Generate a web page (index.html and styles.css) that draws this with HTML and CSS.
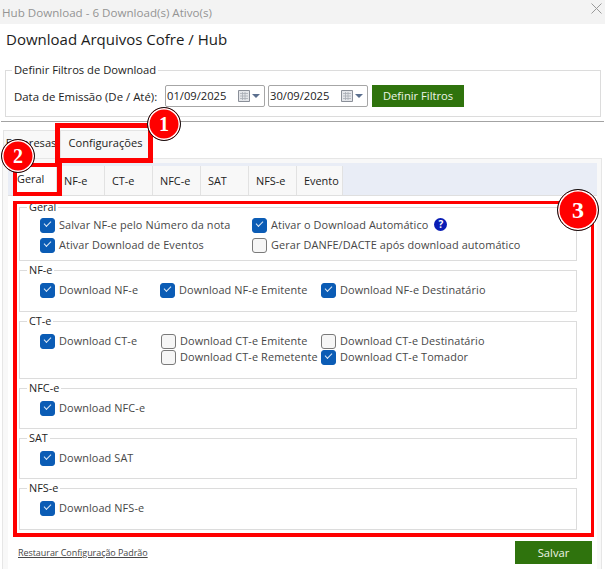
FILE: index.html
```html
<!DOCTYPE html>
<html lang="pt-BR">
<head>
<meta charset="utf-8">
<title>Hub Download</title>
<link rel="stylesheet" href="styles.css">
</head>
<body>
<div class="window">
  <header class="titlebar">
    <span class="title-text">Hub Download - 6 Download(s) Ativo(s)</span>
    <svg class="close" width="11" height="11" viewBox="0 0 11 11"><path d="M.5.5l10 10M10.5.5l-10 10" stroke="#9a9a9a" stroke-width="1" fill="none"/></svg>
  </header>
  <h1 class="heading">Download Arquivos Cofre / Hub</h1>
  <fieldset class="filters">
    <legend>Definir Filtros de Download</legend>
    <div class="filter-row">
      <span class="filter-label">Data de Emissão (De / Até):</span>
      <div class="date"><span class="date-val">01/09/2025</span>
        <svg width="22" height="14" viewBox="0 0 22 14"><path d="M.5 1.5h11v11h-11z" fill="#e4e6ea" stroke="#8a8f98"/><path d="M2 4.5h8M2 7h8M2 9.500h8M4.500 3v8M7 3v8" stroke="#a8adb5" stroke-width=".8"/><path d="M14 5h8l-4 4z" fill="#5b6f8e"/></svg>
      </div>
      <div class="date"><span class="date-val">30/09/2025</span>
        <svg width="22" height="14" viewBox="0 0 22 14"><path d="M.5 1.5h11v11h-11z" fill="#e4e6ea" stroke="#8a8f98"/><path d="M2 4.5h8M2 7h8M2 9.500h8M4.500 3v8M7 3v8" stroke="#a8adb5" stroke-width=".8"/><path d="M14 5h8l-4 4z" fill="#5b6f8e"/></svg>
      </div>
      <button class="btn btn-filter">Definir Filtros</button>
    </div>
  </fieldset>
  <div class="separator"></div>
  <nav class="tabs">
    <div class="tab tab-first">Empresas</div>
    <div class="tab tab-active">Configurações</div>
  </nav>
  <main class="panel">
    <div class="subtabs">
      <div class="subtab subtab-active">Geral</div>
      <div class="subtab">NF-e</div>
      <div class="subtab">CT-e</div>
      <div class="subtab">NFC-e</div>
      <div class="subtab">SAT</div>
      <div class="subtab">NFS-e</div>
      <div class="subtab subtab-last">Evento</div>
    </div>
    <div class="content">
      <fieldset class="group g-geral">
        <legend>Geral</legend>
        <div class="grid grid-geral">
          <label class="chk on">Salvar NF-e pelo Número da nota</label>
          <label class="chk on">Ativar o Download Automático <span class="help">?</span></label>
          <label class="chk on">Ativar Download de Eventos</label>
          <label class="chk">Gerar DANFE/DACTE após download automático</label>
        </div>
      </fieldset>
      <fieldset class="group g-nfe">
        <legend>NF-e</legend>
        <div class="grid grid-nfe">
          <label class="chk on">Download NF-e</label>
          <label class="chk on">Download NF-e Emitente</label>
          <label class="chk on">Download NF-e Destinatário</label>
        </div>
      </fieldset>
      <fieldset class="group g-cte">
        <legend>CT-e</legend>
        <div class="grid grid-cte">
          <label class="chk on">Download CT-e</label>
          <label class="chk">Download CT-e Emitente</label>
          <label class="chk">Download CT-e Destinatário</label>
          <span></span>
          <label class="chk">Download CT-e Remetente</label>
          <label class="chk on">Download CT-e Tomador</label>
        </div>
      </fieldset>
      <fieldset class="group g-one">
        <legend>NFC-e</legend>
        <label class="chk on">Download NFC-e</label>
      </fieldset>
      <fieldset class="group g-one">
        <legend>SAT</legend>
        <label class="chk on">Download SAT</label>
      </fieldset>
      <fieldset class="group g-one g-last">
        <legend>NFS-e</legend>
        <label class="chk on">Download NFS-e</label>
      </fieldset>
      <div class="footer">
        <a class="reset" href="#">Restaurar Configuração Padrão</a>
        <button class="btn btn-save">Salvar</button>
      </div>
    </div>
  </main>
  <div class="mark mark-config"></div>
  <div class="mark mark-geral"></div>
  <div class="mark mark-content"></div>
  <div class="badge badge-1">1</div>
  <div class="badge badge-2">2</div>
  <div class="badge badge-3">3</div>
</div>
</body>
</html>
```
FILE: styles.css
```css
* { box-sizing: border-box; }
html, body { margin: 0; padding: 0; background: #fff; }
body { width: 605px; height: 569px; overflow: hidden; font-family: "Open Sans", "Noto Sans", sans-serif; font-size: 11px; color: #1f1f1f; }
.window { position: relative; width: 605px; height: 569px; display: flex; flex-direction: column; }
.titlebar { height: 24px; flex: none; background: #f3f3f3; display: flex; align-items: center; justify-content: space-between; padding: 0 3px 0 2px; }
.title-text { font-size: 11.600px; color: #949494; }
.close { margin-bottom: 8px; }
.heading { margin: 4px 0 0 6px; height: 22px; line-height: 22px; font-size: 15px; font-weight: 400; color: #1c1c1c; flex: none; }
fieldset { margin: 0; padding: 0; min-width: 0; }
legend { padding: 0 2px; line-height: 12px; height: 12px; }
.filters { flex: none; margin: 14px 4px 0 5px; height: 53px; border: 1px solid #dcdcdc; padding: 0 0 0 8px; }
.filters legend { font-size: 11.200px; color: #222; margin-left: -2px; margin-top: -1px; }
.filter-row { display: flex; align-items: center; height: 23px; margin-top: 8px; }
.filter-label { width: 151px; font-size: 11.400px; color: #222; flex: none; margin-top: 2px; white-space: nowrap; }
.date { width: 100px; height: 22px; border: 1px solid #a6a6a6; border-radius: 2px; margin-right: 3px; display: flex; align-items: center; justify-content: space-between; padding: 0 4px 0 1px; font-size: 11.200px; color: #222; }
.btn { border: 0; border-radius: 0; background: #2f730d; color: #eef5e8; font-family: inherit; padding: 0; }
.btn-filter { width: 92px; height: 22px; margin-left: 1px; font-size: 11.200px; }
.separator { flex: none; height: 1px; margin: 4px 1px 0 1px; background: #a3a3a3; }
.tabs { flex: none; height: 28px; margin: 8px 0 0 3px; display: flex; align-items: stretch; }
.tab { background: #f8f8f8; border: 1px solid #e4e4e4; border-bottom: 0; display: flex; align-items: center; justify-content: center; font-size: 11.100px; color: #222; padding-bottom: 5px; }
.tab-first { width: 56px; }
.tab-active { width: 89px; margin-left: 1px; padding-left: 2px; }
.panel { flex: 1; min-height: 0; margin: 0 3px 0 2px; border: 1px solid #e6e6e6; border-bottom: 0; background: #f8f8f8; padding: 4px 4px 0 5px; display: flex; flex-direction: column; }
.subtabs { flex: none; height: 33px; background: #e9edf6; display: flex; padding: 3px 0 0 5px; border-bottom: 1px solid #dfdfdf; }
.subtab { width: 48px; background: #f8f8f8; border-right: 1px solid #e2e2e2; display: flex; align-items: center; padding: 0 0 1px 7px; font-size: 10.900px; color: #222; }
.subtab-active { width: 44px; background: #fff; padding-left: 4px; padding-bottom: 4px; }
.subtab-last { width: 46px; }
.content { flex: 1; background: #fff; display: flex; flex-direction: column; padding: 5px 20px 0 11px; }
.group { border: 1px solid #dcdcdc; padding: 0 0 0 20px; margin: 0 0 3px 0; flex: none; }
.group legend { margin-left: -13px; font-size: 10.900px; color: #1f1f1f; padding: 0 2px; }
.g-geral { height: 60px; }
.g-nfe { height: 48px; }
.g-cte { height: 64px; }
.g-one { height: 47px; }
.g-last { height: 48px; margin-bottom: 0; }
.grid { display: grid; }
.grid-geral { grid-template-columns: 212px 1fr; grid-auto-rows: 20px; margin-top: 1px; }
.grid-nfe { grid-template-columns: 120px 161px 1fr; grid-auto-rows: 20px; margin-top: 3px; }
.grid-cte { grid-template-columns: 121px 160px 1fr; grid-auto-rows: 16px; margin-top: 5px; }
.g-one .chk { margin-top: 3px; height: 20px; }
.chk { display: flex; align-items: center; font-size: 10.900px; color: #474747; position: relative; padding-left: 19px; white-space: nowrap; letter-spacing: .1px; }
.chk::before { content: ""; position: absolute; left: 0; top: 50%; width: 13px; height: 13px; margin-top: -6.5px; border-radius: 3px; border: 1px solid #7a7a7a; background: #f6f6f6; }
.chk.on::before { background: #0b5cb5; border-color: #0b5cb5; }
.chk.on::after { content: ""; position: absolute; left: 4px; top: 50%; width: 6px; height: 3px; margin-top: -3px; border-left: 1px solid #dfeaf6; border-bottom: 1px solid #dfeaf6; transform: rotate(-45deg); }
.help { display: inline-flex; align-items: center; justify-content: center; width: 13px; height: 13px; border-radius: 50%; background: #0a1db5; color: #fff; font-size: 10px; font-weight: 700; margin-left: 6px; letter-spacing: 0; }
.footer { flex: 1; display: flex; align-items: flex-start; justify-content: space-between; margin-right: -15px; padding-top: 11px; }
.reset { font-size: 9px; color: #474747; text-decoration: underline; margin-top: 5px; margin-left: -1px; letter-spacing: -.06px; }
.btn-save { width: 77px; height: 23px; font-size: 11.200px; }
.mark { position: absolute; border-style: solid; border-color: #f00; }
.mark-config { left: 55px; top: 123px; width: 98px; height: 40px; border-width: 5px; }
.mark-geral { left: 13px; top: 163px; width: 49px; height: 33px; border-width: 4px 5px 4px 4px; }
.mark-content { left: 13px; top: 201px; width: 581px; height: 336px; border-width: 3px 3px 4px 4px; }
.badge { position: absolute; width: 34px; height: 34px; border-radius: 50%; background: #f00; border: 1px solid #111; box-shadow: inset 0 0 0 1.500px #fff; color: #fff; font-family: "Liberation Serif", serif; font-weight: 700; font-size: 20px; display: flex; align-items: center; justify-content: center; }
.badge-1 { left: 147px; top: 107px; }
.badge-2 { left: 1px; top: 139px; }
.badge-3 { left: 557px; top: 189px; width: 42px; height: 42px; font-size: 24px; }
```
